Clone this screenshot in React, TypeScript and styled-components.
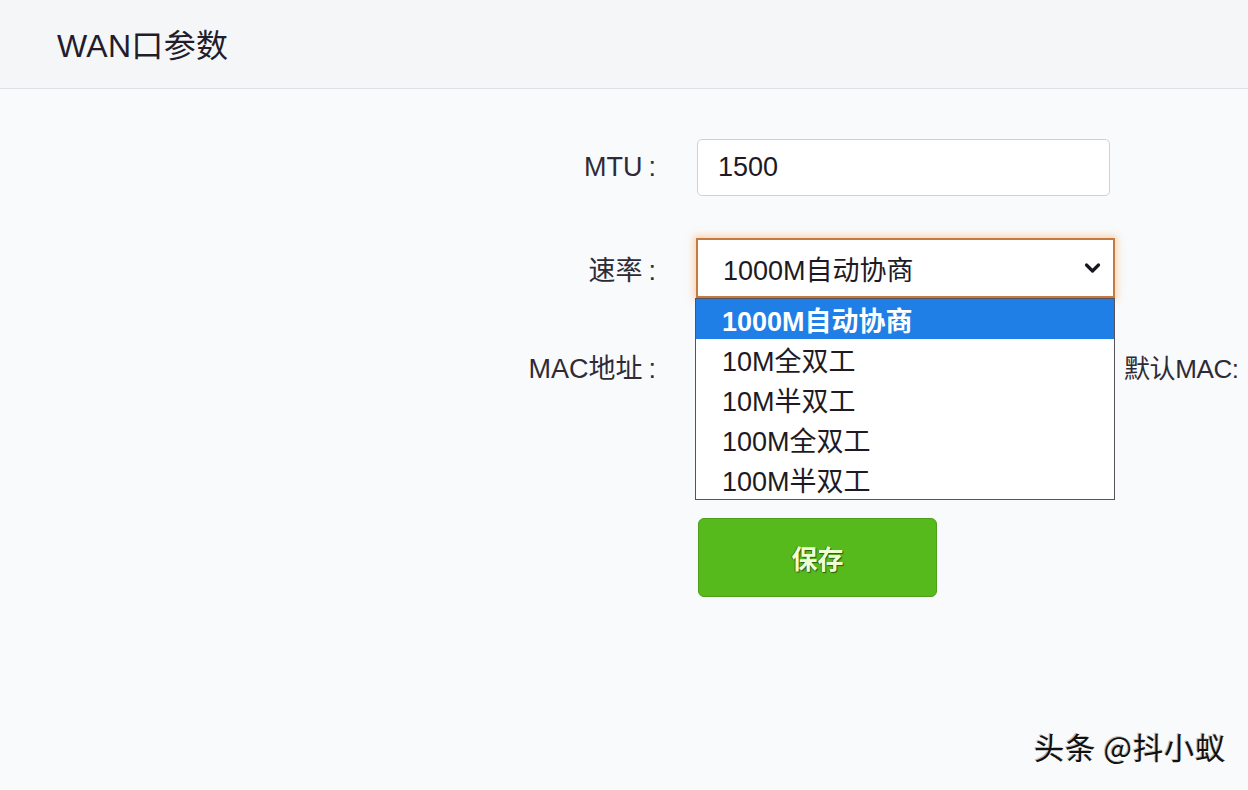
import React from "react";
import styled, { createGlobalStyle } from "styled-components";

const Global = createGlobalStyle`
  html, body { margin: 0; padding: 0; }
  body {
    background: #f9fafc;
    font-family: "Liberation Sans", "Noto Sans CJK SC", sans-serif;
    color: #2a2631;
    width: 1248px;
    height: 790px;
    overflow: hidden;
  }
`;

const Page = styled.div`
  position: relative;
  width: 1248px;
  height: 790px;
  display: flex;
  flex-direction: column;
`;

const Header = styled.header`
  height: 88px;
  background: #f5f6f8;
  border-bottom: 1px solid #dde0e5;
  display: flex;
  align-items: center;
  padding-left: 57px;
`;

const Title = styled.h1`
  margin: 0;
  font-size: 32px;
  font-weight: 400;
  color: #221d2b;
  margin-top: -2px;
  letter-spacing: 0.3px;
`;

const Main = styled.main`
  display: flex;
  flex-direction: column;
  padding-top: 50px;
`;

const Row = styled.div<{ $gap: number }>`
  display: flex;
  align-items: center;
  margin-top: ${(p) => p.$gap}px;
`;

const Label = styled.label`
  width: 656px;
  text-align: right;
  font-size: 27px;
  color: #2f2b36;
  flex-shrink: 0;
`;

const Colon = styled.span`
  margin-left: 6px;
`;

const Control = styled.div`
  margin-left: 41px;
  position: relative;
  display: flex;
  align-items: center;
`;

const TextInput = styled.div`
  width: 413px;
  height: 57px;
  box-sizing: border-box;
  border: 1px solid #cfd1d6;
  border-radius: 5px;
  background: #fff;
  display: flex;
  align-items: center;
  padding-left: 20px;
  font-size: 27px;
  color: #1e1a24;
`;

const SelectBox = styled.div`
  width: 419px;
  height: 60px;
  box-sizing: border-box;
  margin-left: -1px;
  border: 2px solid #c47a40;
  box-shadow: 0 0 7px 2px rgba(248, 170, 90, 0.5);
  background: #fff;
  display: flex;
  align-items: center;
  justify-content: space-between;
  padding: 0 12px 0 25px;
  font-size: 27px;
  color: #1e1a24;
`;

const Chevron = styled.svg`
  width: 17px;
  height: 12px;
`;

const DropList = styled.ul`
  position: absolute;
  top: 60px;
  left: -2px;
  width: 420px;
  height: 202px;
  box-sizing: border-box;
  margin: 0;
  padding: 0;
  list-style: none;
  background: #fff;
  border: 1px solid #56535c;
  z-index: 2;
`;

const Option = styled.li<{ $active?: boolean }>`
  height: 40px;
  display: flex;
  align-items: center;
  padding-left: 26px;
  font-size: 27px;
  color: ${(p) => (p.$active ? "#ffffff" : "#1e1a24")};
  background: ${(p) => (p.$active ? "#1f7fe6" : "transparent")};
  font-weight: ${(p) => (p.$active ? 700 : 400)};
`;

const Aside = styled.span`
  margin-left: 14px;
  font-size: 26px;
  letter-spacing: -0.4px;
  color: #2f2b36;
  white-space: nowrap;
`;

const SaveButton = styled.button`
  width: 239px;
  height: 79px;
  margin-left: 42px;
  border: 1px solid #4c9f1c;
  border-radius: 6px;
  background: #56b91c;
  color: #eeffd2;
  font-family: "Noto Sans CJK SC", sans-serif;
  font-size: 26px;
  font-weight: 700;
  text-shadow: 1px 1px 1px #2d5a10, -1px 0 0 #3c7a16;
  cursor: pointer;
`;

const Watermark = styled.div`
  position: absolute;
  right: 22px;
  bottom: 22px;
  font-family: "Noto Sans CJK SC", sans-serif;
  font-size: 30px;
  font-weight: 400;
  color: #111;
  text-shadow: 1px 1px 0 #fff, -1px -1px 0 #bbb, 0.5px 0 0 #111;
  letter-spacing: 1px;
`;

const speeds = ["1000M自动协商", "10M全双工", "10M半双工", "100M全双工", "100M半双工"];

export default function App() {
  return (
    <Page>
      <Global />
      <Header>
        <Title>WAN口参数</Title>
      </Header>
      <Main>
        <Row $gap={0}>
          <Label>MTU<Colon>:</Colon></Label>
          <Control>
            <TextInput>1500</TextInput>
          </Control>
        </Row>
        <Row $gap={42}>
          <Label>速率<Colon>:</Colon></Label>
          <Control>
            <SelectBox>
              <span>1000M自动协商</span>
              <Chevron viewBox="0 0 17 12">
                <polyline points="2.5,3 8.5,9 14.5,3" fill="none" stroke="#1a1620" strokeWidth="3.2" strokeLinecap="round" strokeLinejoin="round" />
              </Chevron>
            </SelectBox>
            <DropList>
              {speeds.map((s, i) => (
                <Option key={s} $active={i === 0}>{s}</Option>
              ))}
            </DropList>
          </Control>
        </Row>
        <Row $gap={40}>
          <Label>MAC地址<Colon>:</Colon></Label>
          <Control>
            <TextInput />
            <Aside>默认MAC:</Aside>
          </Control>
        </Row>
        <Row $gap={123}>
          <Label as="span" />
          <SaveButton>保存</SaveButton>
        </Row>
      </Main>
      <Watermark>头条 @抖小蚁</Watermark>
    </Page>
  );
}
